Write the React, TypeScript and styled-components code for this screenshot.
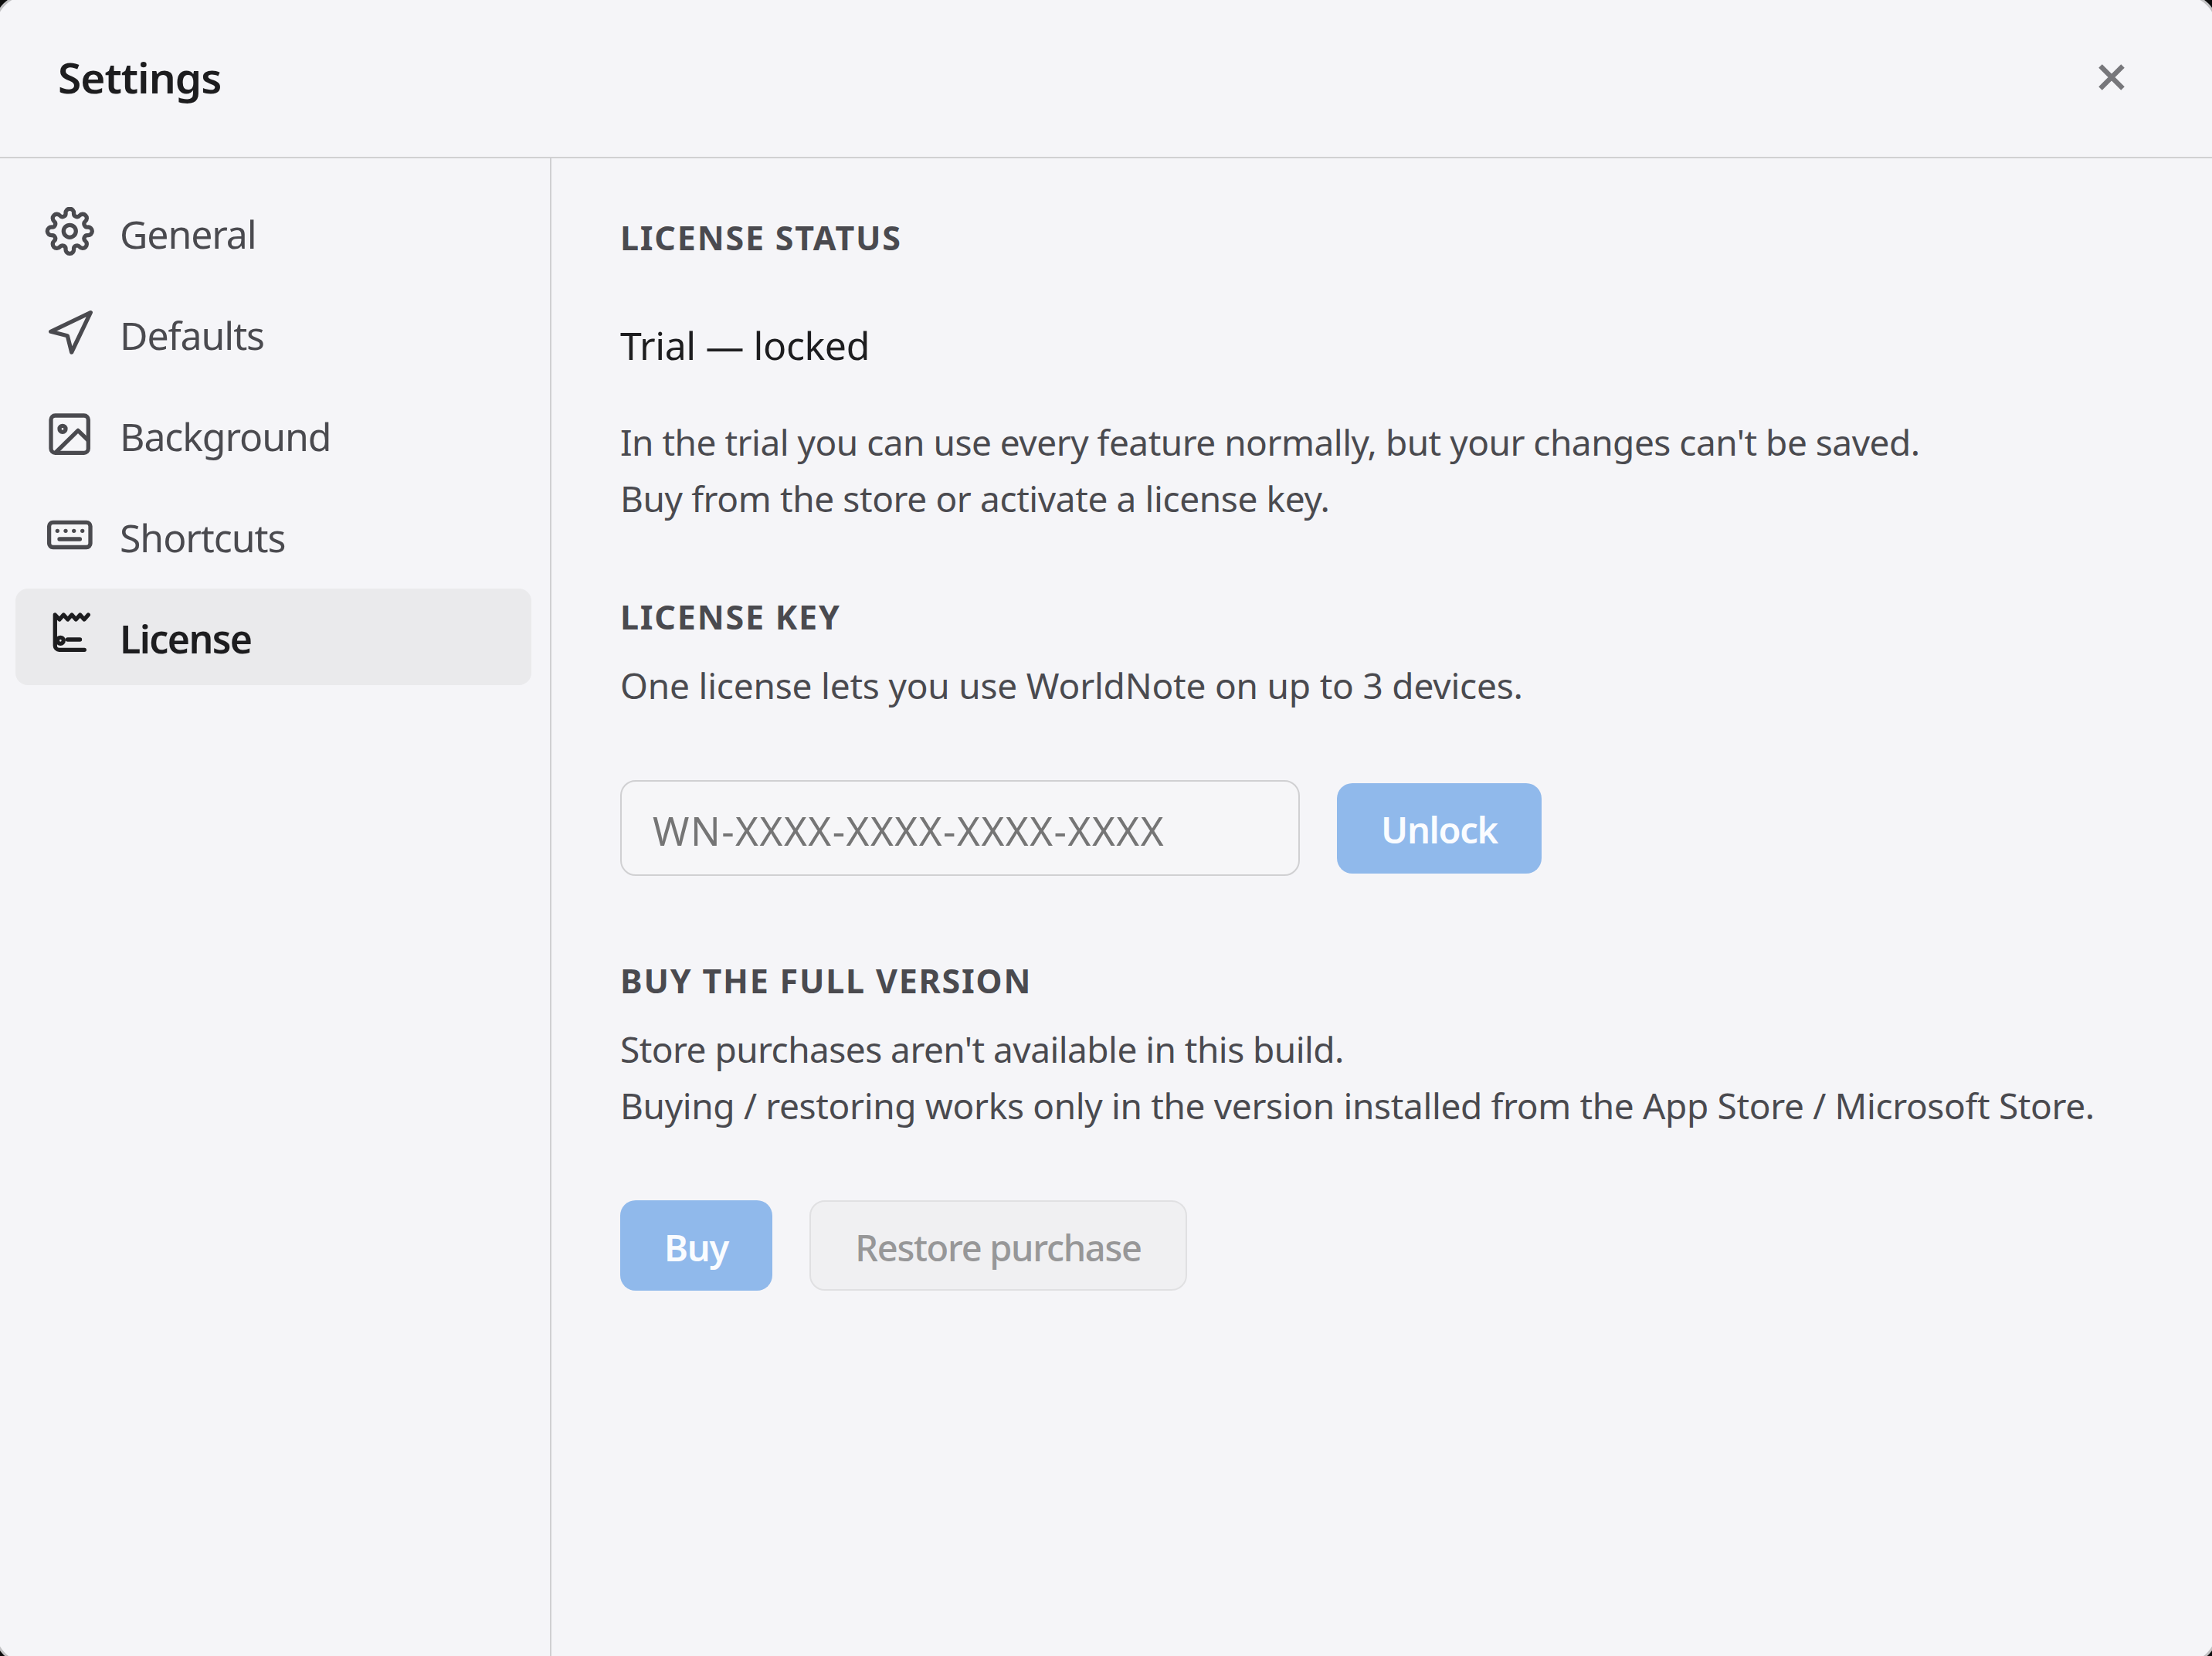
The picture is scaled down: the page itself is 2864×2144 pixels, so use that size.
import styled, { createGlobalStyle } from "styled-components";

const GlobalStyle = createGlobalStyle`
  *, *::before, *::after {
    box-sizing: border-box;
  }
  body {
    margin: 0;
    overflow: hidden;
    background-color: #0c0c0c;
    font-family: "Noto Sans", "Open Sans", sans-serif;
  }
`

// The window runs a little past the viewport, only its corners show
const Shell = styled.div`
  width: 100vw;
  height: 100vh;
  overflow: hidden;
  display: grid;
`

const Window = styled.div`
  margin: -8px -8px -11px;
  border: 3px solid #c2c2c4;
  border-radius: 43px;
  padding: 5px 5px 8px;
  background-color: #f5f5f8;
  overflow: hidden;
  display: flex;
  flex-direction: column;
`

const Header = styled.header`
  height: 205px;
  flex: none;
  border-bottom: 2px solid #d0d0d2;
  padding: 0 108px 0 75px;
  display: flex;
  align-items: center;
  justify-content: space-between;
`

const Title = styled.h1`
  margin: 0 0 3px;
  font-size: 55px;
  font-weight: 600;
  letter-spacing: -1px;
  line-height: 80px;
  color: #1d1d1f;
`

const CloseButton = styled.button`
  width: 44px;
  height: 44px;
  padding: 0;
  border: none;
  background: none;
  color: #77777b;
  margin-bottom: 3px;
  svg{
    display: block;
  }
`

const Body = styled.div`
  flex: 1;
  display: flex;
`

const Sidebar = styled.nav`
  width: 714px;
  flex: none;
  border-right: 2px solid #d0d0d2;
  padding: 33px 24px 0 20px;
  display: flex;
  flex-direction: column;
  gap: 6px;
`

const NavItem = styled.a<{ $active?: boolean }>`
  height: 125px;
  padding-left: 38px;
  border-radius: 16px;
  display: flex;
  align-items: center;
  gap: 33px;
  font-size: 50px;
  line-height: 70px;
  letter-spacing: ${props => (props.$active ? -1.6 : -1.1)}px;
  font-weight: ${props => (props.$active ? 600 : 400)};
  color: ${props => (props.$active ? "#1d1d1f" : "#4a4a4f")};
  background-color: ${props => (props.$active ? "#eaeaec" : "transparent")};
  svg{
    flex: none;
    display: block;
    margin-bottom: 1px;
  }
`

const NavLabel = styled.span`
  padding-top: 4px;
`

const Content = styled.main`
  flex: 1;
  padding: 71px 0 0 89px;
`

const Section = styled.section<{ $bottom?: number }>`
  display: flex;
  flex-direction: column;
  align-items: flex-start;
  margin-bottom: ${props => props.$bottom ?? 0}px;
`

const SectionTitle = styled.h2`
  margin: 0;
  font-size: 43px;
  font-weight: 700;
  line-height: 64px;
  letter-spacing: 1.8px;
  color: #4a4a4f;
`

const Status = styled.p`
  margin: 71px 0 0;
  font-size: 50px;
  line-height: 72px;
  letter-spacing: -0.4px;
  color: #1d1d1f;
`

const Line = styled.span<{ $spacing: number }>`
  display: block;
  white-space: nowrap;
  letter-spacing: ${props => props.$spacing}px;
`

const Text = styled.p<{ $top: number }>`
  margin: ${props => props.$top}px 0 0;
  font-size: 46px;
  line-height: 73px;
  color: #4a4a4f;
`

const Actions = styled.div`
  margin-top: 86px;
  display: flex;
  align-items: center;
  gap: 48px;
`

const KeyInput = styled.input`
  width: 880px;
  height: 124px;
  padding: 6px 40px 0;
  border: 2px solid #d0d0d2;
  border-radius: 20px;
  background-color: #f6f6f8;
  font-family: inherit;
  font-size: 51px;
  letter-spacing: 1.5px;
  &::placeholder{
    color: #757575;
    opacity: 1;
  }
`

const Button = styled.button<{ $primary?: boolean; $width: number }>`
  width: ${props => props.$width}px;
  height: 117px;
  padding: 4px 0 0;
  border-radius: 20px;
  border: ${props => (props.$primary ? "none" : "2px solid #e0e0e2")};
  background-color: ${props => (props.$primary ? "#90b9eb" : "#f0f0f2")};
  color: ${props => (props.$primary ? "#fafcff" : "#979798")};
  font-family: inherit;
  font-size: 47px;
  font-weight: ${props => (props.$primary ? 600 : 500)};
  letter-spacing: -1.3px;
`

const Svg = styled.svg.attrs({
  width: 64,
  height: 64,
  viewBox: "0 0 64 64",
  fill: "none",
  stroke: "currentColor",
  strokeWidth: 5.3,
  strokeLinecap: "round",
  strokeLinejoin: "round",
})``

// Eight round teeth joined by round valleys
const gearPath = () => {
  const cx = 32.3;
  const cy = 31.3;
  const point = (tooth: number, side: number) => {
    const angle = (tooth * Math.PI) / 4;
    const dir = angle + (side * 94.8 * Math.PI) / 180;
    const x = cx + 23.7 * Math.cos(angle) + 5.3 * Math.cos(dir);
    const y = cy + 23.7 * Math.sin(angle) + 5.3 * Math.sin(dir);
    return `${x.toFixed(2)} ${y.toFixed(2)}`;
  };
  let d = `M${point(0, -1)}`;
  for (let i = 0; i < 8; i++) {
    d += `A5.3 5.3 0 1 1 ${point(i, 1)}A4.2 4.2 0 0 0 ${point(i + 1, -1)}`;
  }
  return d + "Z";
};

const GearIcon = () => (
  <Svg>
    <path d={gearPath()} />
    <circle cx="32.3" cy="31.3" r="8" />
  </Svg>
);

const ArrowIcon = () => (
  <Svg>
    <path d="M59.3 5.7 7.7 30.3 29.3 35.7 34.7 57Z" />
  </Svg>
);

const ImageIcon = () => (
  <Svg>
    <rect x="8" y="8" width="48.3" height="48.3" rx="5.5" />
    <circle cx="23" cy="25.3" r="4" />
    <path d="M15 55 43 27.3 56 40" />
  </Svg>
);

const KeyboardIcon = () => (
  <Svg>
    <rect x="5.6" y="15.3" width="53.4" height="32.2" rx="5" />
    <path d="M16.3 26.3h.01M27 26.3h.01M37.7 26.3h.01M48.7 26.3h.01M19 37h26.4" />
  </Svg>
);

const LicenseIcon = () => (
  <Svg>
    <path d="M51.3 49.3H18.6a5.3 5.3 0 0 1-5.3-5.3V4l5.7 6 5.3-6 5.4 6L35 4l5.3 6 5.4-6 5.3 6 5.3-6" />
    <circle cx="20.3" cy="37.3" r="4" />
    <path d="M29.5 36h16" />
  </Svg>
);

const navItems = [
  { label: "General", icon: GearIcon },
  { label: "Defaults", icon: ArrowIcon },
  { label: "Background", icon: ImageIcon },
  { label: "Shortcuts", icon: KeyboardIcon },
  { label: "License", icon: LicenseIcon, active: true },
];

const App = () => {
  return (
    <Shell>
      <GlobalStyle />
      <Window>
        <Header>
          <Title>Settings</Title>
          <CloseButton aria-label="Close">
            <svg width="44" height="44" viewBox="0 0 44 44" stroke="currentColor" strokeWidth="6.4">
              <path d="M7.5 7.5 36.5 36.5M36.5 7.5 7.5 36.5" />
            </svg>
          </CloseButton>
        </Header>
        <Body>
          <Sidebar>
            {navItems.map(({ label, icon: Icon, active }) => (
              <NavItem key={label} $active={active}>
                <Icon />
                <NavLabel>{label}</NavLabel>
              </NavItem>
            ))}
          </Sidebar>
          <Content>
            <Section $bottom={85}>
              <SectionTitle>LICENSE STATUS</SectionTitle>
              <Status>Trial — locked</Status>
              <Text $top={53}>
                <Line $spacing={-0.5}>In the trial you can use every feature normally, but your changes can't be saved.</Line>
                <Line $spacing={-0.39}>Buy from the store or activate a license key.</Line>
              </Text>
            </Section>
            <Section $bottom={104}>
              <SectionTitle>LICENSE KEY</SectionTitle>
              <Text $top={20}>
                <Line $spacing={-0.2}>One license lets you use WorldNote on up to 3 devices.</Line>
              </Text>
              <Actions>
                <KeyInput placeholder="WN-XXXX-XXXX-XXXX-XXXX" />
                <Button $primary $width={265}>Unlock</Button>
              </Actions>
            </Section>
            <Section>
              <SectionTitle>BUY THE FULL VERSION</SectionTitle>
              <Text $top={20}>
                <Line $spacing={-0.54}>Store purchases aren't available in this build.</Line>
                <Line $spacing={-0.35}>Buying / restoring works only in the version installed from the App Store / Microsoft Store.</Line>
              </Text>
              <Actions>
                <Button $primary $width={197}>Buy</Button>
                <Button $width={489}>Restore purchase</Button>
              </Actions>
            </Section>
          </Content>
        </Body>
      </Window>
    </Shell>
  )
};

export default App
